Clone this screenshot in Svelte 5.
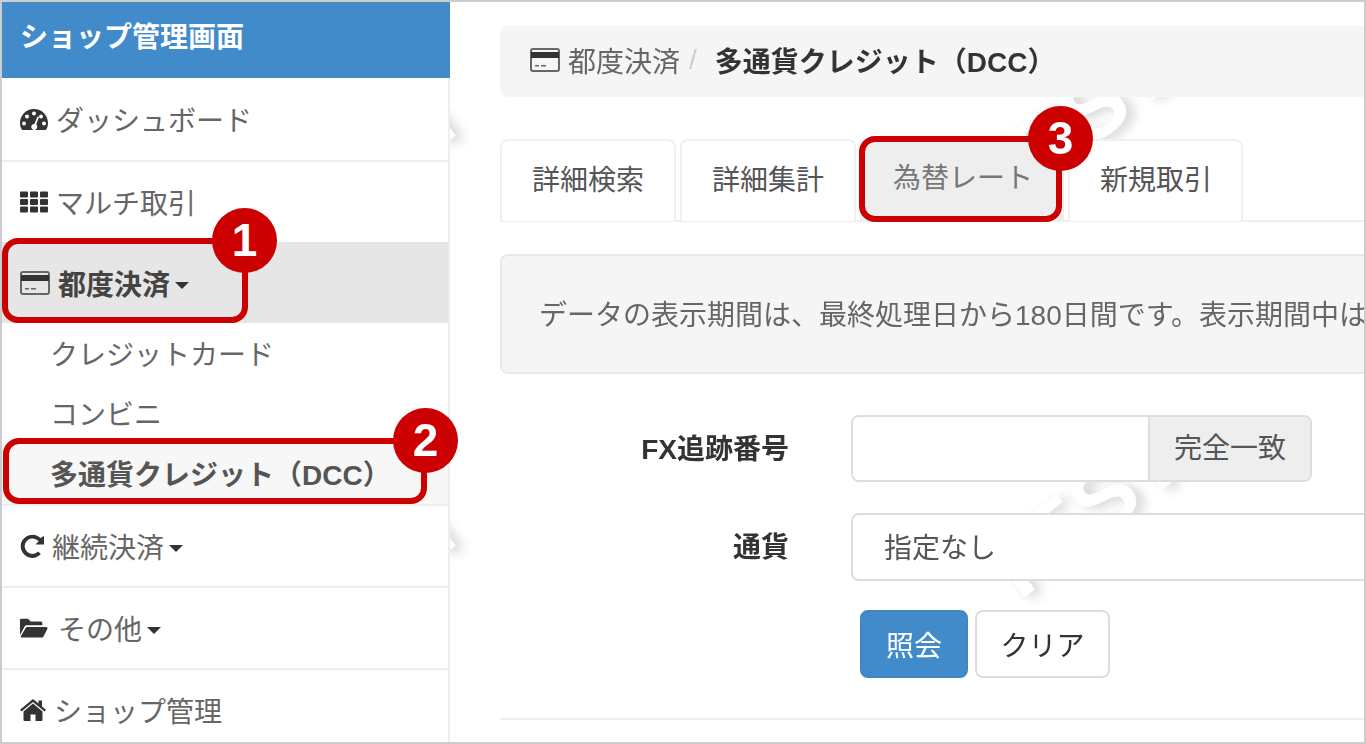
<script>
  const wmarks = [
    { x: 505, y: 72 },
    { x: 515, y: 462 },
    { x: -202, y: 116 },
    { x: -202, y: 526 },
  ];
</script>

{#snippet card()}
  <svg class="ic card" viewBox="0 0 30 26">
    <rect x="1" y="2" width="28" height="22" rx="2" fill="none" stroke="#666" stroke-width="2" />
    <rect x="1" y="5" width="28" height="6" fill="#333" />
    <rect x="5" y="18" width="4" height="1.500" fill="#666" />
    <rect x="11" y="18" width="5" height="1.500" fill="#666" />
  </svg>
{/snippet}

<div class="page">
  <aside class="side">
    <div class="brand">ショップ管理画面</div>
    <nav>
      <a class="item">
        <svg class="ic" viewBox="0 0 28 24"><path d="M14 2C6.300 2 0 8.200 0 16c0 2.400.6 4.600 1.700 6.600.2.300.6.400 1 .4h22.600c.4 0 .8-.1 1-.4 1.100-2 1.700-4.200 1.700-6.600 0-7.800-6.300-14-14-14zM14 4.500a2 2 0 1 1 0 4 2 2 0 0 1 0-4zM7 7.500a2 2 0 1 1 0 4 2 2 0 0 1 0-4zM21 7.500a2 2 0 1 1 0 4 2 2 0 0 1 0-4zM4 14.500a2 2 0 1 1 0 4 2 2 0 0 1 0-4zM24 14.500a2 2 0 1 1 0 4 2 2 0 0 1 0-4zM17.500 9.500l1.500.6-2.800 7.500a3 3 0 1 1-1.800-.7z" fill-rule="evenodd"/></svg>
        <span>ダッシュボード</span>
      </a>
      <a class="item">
        <svg class="ic" viewBox="0 0 28 21"><path d="M0 1a1 1 0 0 1 1-1h6a1 1 0 0 1 1 1v4a1 1 0 0 1-1 1H1a1 1 0 0 1-1-1zM10 1a1 1 0 0 1 1-1h6a1 1 0 0 1 1 1v4a1 1 0 0 1-1 1h-6a1 1 0 0 1-1-1zM20 1a1 1 0 0 1 1-1h6a1 1 0 0 1 1 1v4a1 1 0 0 1-1 1h-6a1 1 0 0 1-1-1zM0 8.500a1 1 0 0 1 1-1h6a1 1 0 0 1 1 1v4a1 1 0 0 1-1 1H1a1 1 0 0 1-1-1zM10 8.500a1 1 0 0 1 1-1h6a1 1 0 0 1 1 1v4a1 1 0 0 1-1 1h-6a1 1 0 0 1-1-1zM20 8.500a1 1 0 0 1 1-1h6a1 1 0 0 1 1 1v4a1 1 0 0 1-1 1h-6a1 1 0 0 1-1-1zM0 16a1 1 0 0 1 1-1h6a1 1 0 0 1 1 1v4a1 1 0 0 1-1 1H1a1 1 0 0 1-1-1zM10 16a1 1 0 0 1 1-1h6a1 1 0 0 1 1 1v4a1 1 0 0 1-1 1h-6a1 1 0 0 1-1-1zM20 16a1 1 0 0 1 1-1h6a1 1 0 0 1 1 1v4a1 1 0 0 1-1 1h-6a1 1 0 0 1-1-1z"/></svg>
        <span>マルチ取引</span>
      </a>
      <a class="item active">
        {@render card()}
        <b>都度決済</b><i class="caret"></i>
      </a>
      <div class="sub">
        <a>クレジットカード</a>
        <a>コンビニ</a>
        <a class="cur">多通貨クレジット（DCC）</a>
      </div>
      <a class="item">
        <svg class="ic redo" viewBox="0 0 24 24"><path d="M24 2v8.500h-8.500l3.200-3.200A8 8 0 0 0 12.200 4.500 7.700 7.700 0 1 0 18 17.500l2.900 2.600A11.600 11.600 0 1 1 12.200.7c3.100 0 6 1.200 8.300 3.300z"/></svg>
        <span>継続決済</span><i class="caret"></i>
      </a>
      <a class="item">
        <svg class="ic folder" viewBox="0 0 30 24"><path d="M0 3.500A1.500 1.500 0 0 1 1.500 2h7l3 3H22a2 2 0 0 1 2 2v2H7.500a3 3 0 0 0-2.700 1.600L0 19.500zM7.500 11H28a1.500 1.500 0 0 1 1.300 2.200L25 21.500a1.500 1.500 0 0 1-1.300.8H2a1.200 1.200 0 0 1-1-1.800L6.200 11.800A1.500 1.500 0 0 1 7.500 11z"/></svg>
        <span>その他</span><i class="caret"></i>
      </a>
      <a class="item">
        <svg class="ic home" viewBox="0 0 26 24"><path d="M13 5.500 3.500 13.500V22a1 1 0 0 0 1 1h6v-6.500h5V23h6a1 1 0 0 0 1-1v-8.500zM13 1 0 11.800l1.500 1.800L13 4l11.500 9.600 1.500-1.800-4-3.400V2.500h-3.500v3z"/></svg>
        <span>ショップ管理</span>
      </a>
    </nav>
  </aside>

  <main class="main">
    {#each wmarks as w}
      <span class="wm" style="left:{w.x}px;top:{w.y}px">TEST</span>
    {/each}

    <div class="crumb">
      {@render card()}
      <span>都度決済</span>
      <span class="sep">/</span>
      <b>多通貨クレジット（DCC）</b>
    </div>

    <ul class="tabs">
      <li>詳細検索</li>
      <li>詳細集計</li>
      <li class="on">為替レート</li>
      <li>新規取引</li>
    </ul>

    <div class="well">データの表示期間は、最終処理日から180日間です。表示期間中は、為替レートを照会できます。</div>

    <form class="form">
      <label for="fx">FX追跡番号</label>
      <div class="group">
        <input id="fx" type="text" />
        <span class="addon">完全一致</span>
      </div>
      <label for="cur">通貨</label>
      <div id="cur" class="select">指定なし</div>
      <div class="btns">
        <button type="button" class="btn primary">照会</button>
        <button type="button" class="btn">クリア</button>
      </div>
    </form>
    <hr />
  </main>

  <div class="mark" style="left:0;top:236px;width:246px;height:85px"></div>
  <div class="badge" style="left:210px;top:206px">1</div>
  <div class="mark" style="left:1px;top:436px;width:424px;height:66px"></div>
  <div class="badge" style="left:391px;top:406px">2</div>
  <div class="mark" style="left:857px;top:134px;width:203px;height:86px"></div>
  <div class="badge" style="left:1026px;top:104px">3</div>
</div>

<style>
  :global(body) {
    margin: 0;
    background: #fff;
  }
  .page {
    position: relative;
    box-sizing: border-box;
    width: 1366px;
    height: 744px;
    border: 2px solid #ccc;
    display: flex;
    overflow: hidden;
    font-family: "Liberation Sans", "Noto Sans CJK JP", sans-serif;
    font-size: 28px;
    color: #555;
    filter: blur(0.5px);
  }
  .side {
    position: relative;
    z-index: 1;
    width: 448px;
    flex: none;
    display: flex;
    flex-direction: column;
    background: #fff;
  }
  .brand {
    flex: none;
    height: 76px;
    background: #428bca;
    color: #fff;
    font-weight: 700;
    line-height: 72px;
    padding-left: 18px;
    box-sizing: border-box;
  }
  nav {
    border-right: 2px solid #eee;
    flex: 1;
  }
  .item {
    display: flex;
    align-items: center;
    height: 82px;
    box-sizing: border-box;
    padding: 0 0 0 18px;
    border-bottom: 2px solid #eee;
    color: #666;
  }
  .item:first-child {
    height: 84px;
  }
  .item:nth-child(2) {
    height: 80px;
    border-bottom: none;
  }
  .item.active {
    background: #e6e6e6;
    color: #333;
    border-bottom: none;
    height: 81px;
    padding-top: 1px;
  }
  .item b {
    color: #444;
  }
  .ic {
    width: 28px;
    height: 28px;
    fill: #333;
    flex: none;
    margin-right: 8px;
  }
  .ic.card {
    width: 30px;
    height: 26px;
    margin-right: 8px;
  }
  .ic.redo {
    width: 24px;
    height: 24px;
    margin-right: 8px;
  }
  .ic.folder {
    margin-right: 10px;
  }
  .ic.home {
    width: 26px;
    height: 24px;
  }
  .caret {
    width: 0;
    height: 0;
    margin-left: 5px;
    margin-top: 4px;
    border-top: 7px solid #333;
    border-left: 7px solid transparent;
    border-right: 7px solid transparent;
  }
  .sub {
    display: flex;
    flex-direction: column;
    height: 183px;
    border-bottom: 2px solid #eee;
    box-sizing: border-box;
  }
  .sub a {
    height: 60px;
    line-height: 66px;
    padding-left: 48px;
    color: #666;
  }
  .sub .cur {
    font-weight: 700;
    color: #555;
    background: #f7f7f7;
    flex: 1;
  }
  .main {
    position: relative;
    flex: 1;
    min-width: 0;
    padding: 24px 0 0 50px;
    overflow: hidden;
  }
  .wm {
    position: absolute;
    font-size: 90px;
    font-weight: 700;
    color: #fff;
    text-shadow: 5px 6px 12px #d4d4d4;
    transform: rotate(-38deg);
  }
  .crumb {
    position: relative;
    display: flex;
    align-items: center;
    height: 71px;
    box-sizing: border-box;
    padding: 0 0 3px 30px;
    background: #f5f5f5;
    border-radius: 8px 0 0 8px;
    color: #666;
  }
  .crumb .sep {
    color: #ccc;
    margin: 0 18px 0 9px;
  }
  .crumb b {
    color: #333;
  }
  .tabs {
    position: relative;
    display: flex;
    list-style: none;
    margin: 42px 0 0;
    padding: 0;
    height: 83px;
    border-bottom: 2px solid #eee;
    box-sizing: border-box;
    background: #fff;
  }
  .tabs li {
    box-sizing: border-box;
    height: 82px;
    width: 176px;
    margin-right: 4px;
    padding-left: 30px;
    line-height: 80px;
    border: 2px solid #f0f0f0;
    border-bottom: none;
    border-radius: 8px 8px 0 0;
    color: #555;
    background: #fff;
  }
  .tabs li.on {
    width: 204px;
    padding-left: 33px;
    background: #eee;
    color: #777;
    border: none;
  }
  .tabs li:last-child {
    width: 175px;
  }
  .well {
    position: relative;
    box-sizing: border-box;
    height: 120px;
    margin-top: 32px;
    background: #f5f5f5;
    border: 2px solid #e9e9e9;
    border-right: none;
    border-radius: 8px 0 0 8px;
    padding-left: 37px;
    line-height: 120px;
    white-space: nowrap;
    color: #666;
  }
  .form {
    position: relative;
    display: grid;
    grid-template-columns: 289px 1fr;
    column-gap: 62px;
    row-gap: 31px;
    margin-top: 41px;
    align-items: center;
  }
  label {
    text-align: right;
    font-weight: 700;
    color: #333;
    font-size: 28px;
    padding-bottom: 4px;
  }
  .group {
    display: flex;
    width: 461px;
    height: 67px;
    box-sizing: border-box;
    border: 2px solid #ddd;
    border-radius: 8px;
    overflow: hidden;
  }
  .group input {
    flex: 1;
    min-width: 0;
    border: none;
    background: #fff;
  }
  .addon {
    width: 162px;
    box-sizing: border-box;
    background: #eee;
    border-left: 2px solid #ddd;
    text-align: center;
    line-height: 64px;
    color: #555;
  }
  .select {
    box-sizing: border-box;
    height: 68px;
    border: 2px solid #ddd;
    border-right: none;
    border-radius: 8px 0 0 8px;
    padding-left: 31px;
    line-height: 68px;
    background: #fff;
    color: #555;
  }
  .btns {
    grid-column: 2;
    display: flex;
    gap: 7px;
    margin-left: 9px;
    margin-top: -2px;
  }
  .btn {
    height: 68px;
    width: 135px;
    box-sizing: border-box;
    border: 2px solid #ddd;
    border-radius: 8px;
    background: #fff;
    font: inherit;
    color: #333;
    padding: 0;
  }
  .btn.primary {
    width: 108px;
    background: #428bca;
    border-color: #3f86c4;
    color: #fff;
  }
  hr {
    position: relative;
    border: none;
    border-top: 2px solid #eee;
    margin: 40px 0 0;
  }
  .mark {
    position: absolute;
    z-index: 2;
    box-sizing: border-box;
    border: 6px solid #c00;
    border-radius: 16px;
  }
  .badge {
    position: absolute;
    z-index: 2;
    width: 65px;
    height: 65px;
    border-radius: 50%;
    background: #c00;
    color: #fff;
    font-weight: 700;
    font-size: 46px;
    line-height: 65px;
    text-align: center;
  }
</style>
